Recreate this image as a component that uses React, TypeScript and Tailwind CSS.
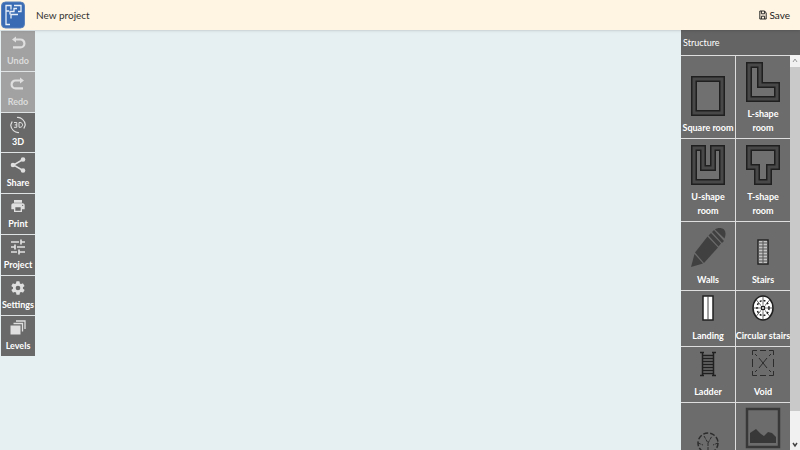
import type { ReactNode } from "react";

const UndoIcon = () => (
  <svg viewBox="0 0 16 16" className="size-4" fill="none" stroke="currentColor" strokeWidth="2.2">
    <path d="M4 4.500h6.500a3.800 3.800 0 0 1 0 7.800H3" />
    <path d="M6 1.500v6L2 4.500z" fill="currentColor" stroke="none" />
  </svg>
);

const RedoIcon = () => (
  <svg viewBox="0 0 16 16" className="size-4" fill="none" stroke="currentColor" strokeWidth="2.2">
    <path d="M12 4.500H5.500a3.800 3.800 0 0 0 0 7.800H13" />
    <path d="M10 1.500v6l4-3z" fill="currentColor" stroke="none" />
  </svg>
);

const ThreeDIcon = () => (
  <svg viewBox="0 0 18 18" className="size-[18px]" fill="none" stroke="currentColor">
    <path d="M8 1.500c4-.5 8 3 8.300 7.500M14.800 12.500l1.500-3.500M10 16.500C6 17 2 13.500 1.700 9M3.200 5.500L1.700 9" strokeWidth="1.200" />
    <path d="M5 6.500h2.800v4.800H5M5.800 8.900h2M10 6.500v4.800h1c3.400 0 3.400-4.800 0-4.800z" />
  </svg>
);

const ShareIcon = () => (
  <svg viewBox="0 0 18 18" className="size-[18px]" fill="currentColor">
    <path d="M14 3.500L4.500 9l9.500 5.500" fill="none" stroke="currentColor" strokeWidth="1.500" />
    <circle cx="14" cy="3.500" r="2.300" />
    <circle cx="4" cy="9" r="2.300" />
    <circle cx="14" cy="14.500" r="2.300" />
  </svg>
);

const PrintIcon = () => (
  <svg viewBox="0 0 24 24" className="size-4" fill="currentColor">
    <path d="M19 8H5c-1.700 0-3 1.300-3 3v6h4v4h12v-4h4v-6c0-1.700-1.300-3-3-3zm-3 11H8v-5h8v5zm3-7a1 1 0 1 1 0-2 1 1 0 0 1 0 2zM18 3H6v4h12V3z" />
  </svg>
);

const ProjectIcon = () => (
  <svg viewBox="0 0 18 18" className="size-[18px]" fill="none" stroke="currentColor" strokeWidth="1.700">
    <path d="M2 4h8M12 4h4M12 1.500v5M2 9h4M8 9h8M6 6.500v5M2 14h6M10 14h6M10 11.500v5" />
  </svg>
);

const SettingsIcon = () => (
  <svg viewBox="0 0 24 24" className="size-4" fill="currentColor">
    <path d="M19.400 13a7.800 7.800 0 0 0 0-2l2.100-1.600a.5.5 0 0 0 .1-.7l-2-3.400a.5.500 0 0 0-.6-.2l-2.500 1a7.300 7.300 0 0 0-1.700-1l-.4-2.600a.5.500 0 0 0-.5-.5h-4a.5.500 0 0 0-.5.500L9 5.100a7.700 7.700 0 0 0-1.700 1l-2.500-1a.5.500 0 0 0-.6.200l-2 3.400a.5.500 0 0 0 .1.700L4.500 11a8 8 0 0 0 0 2l-2.100 1.600a.5.500 0 0 0-.1.700l2 3.400c.1.200.4.300.6.200l2.500-1a7.300 7.300 0 0 0 1.700 1l.4 2.600c0 .3.200.5.500.5h4c.3 0 .5-.2.500-.5l.4-2.600a7.700 7.700 0 0 0 1.700-1l2.500 1c.2.100.5 0 .6-.2l2-3.400a.5.500 0 0 0-.1-.7zM12 15.500a3.500 3.500 0 1 1 0-7 3.500 3.500 0 0 1 0 7z" />
  </svg>
);

const LevelsIcon = () => (
  <svg viewBox="0 0 18 18" className="size-[18px]" fill="none" stroke="currentColor">
    <rect x="2" y="7" width="9" height="8" fill="currentColor" />
    <path d="M4.500 4.500h9v8M7 2h9v8" strokeWidth="1.300" />
  </svg>
);

// the same outline drawn twice: dark edges first, then the grey wall between them
const Room = ({ d }: { d: string }) => (
  <svg viewBox="0 0 36 42" className="h-[42px] w-9" fill="#707070">
    <path d={d} stroke="#1f1f1f" strokeWidth="6" />
    <path d={d} stroke="#484848" strokeWidth="3" fill="none" />
  </svg>
);

const WallsIcon = () => (
  <svg viewBox="0 0 36 42" className="h-[42px] w-9" fill="#404040">
    <path d="M1 40L4.500 27l8.500 9.500z" />
    <path d="M5 25.500L17.500 9.500 28 20.500 14 36z" />
    <path d="M18.500 8.500L21 6l10 10.500-2.500 3zM22 5l2-2 10 11-2 2zM25 2.500c2-2 7-2 9 0s2 6 .5 9z" />
  </svg>
);

const StairsIcon = () => (
  <svg viewBox="0 0 12 26" className="h-[26px] w-3">
    <rect x="1" y="1" width="10" height="24" fill="#c4c4c4" stroke="#252525" strokeWidth="1.500" />
    <path d="M6 1v24M1 4h10M1 7h10M1 10h10M1 13h10M1 16h10M1 19h10M1 22h10" stroke="#555" />
  </svg>
);

const LandingIcon = () => (
  <svg viewBox="0 0 12 26" className="h-[26px] w-3">
    <rect x="1" y="1" width="10" height="24" fill="#fff" stroke="#202020" strokeWidth="1.500" />
    <path d="M6 1v24" stroke="#444" />
  </svg>
);

const CircularIcon = () => (
  <svg viewBox="0 0 24 26" className="h-[26px] w-6" fill="none" stroke="#202020">
    <ellipse cx="12" cy="13" rx="10" ry="12" fill="#fff" strokeWidth="1.500" />
    <ellipse cx="12" cy="13" rx="6" ry="7.500" strokeWidth="1.500" strokeDasharray="2 2" />
    <path d="M12 1v24M2 13h20M5 4.500l14 17M19 4.500L5 21.500" strokeWidth=".7" />
    <circle cx="12" cy="13" r="3" fill="#222" stroke="#eee" />
    <circle cx="12" cy="13" r="1" fill="#eee" stroke="none" />
  </svg>
);

const LadderIcon = () => (
  <svg viewBox="0 0 16 26" className="h-[26px] w-4" fill="none" stroke="#202020">
    <path d="M2.500 1v24M13.500 1v24" strokeWidth="1.500" />
    <path d="M0 1.500h4M12 1.500h4M0 24.500h4M12 24.500h4M2 4.500h12M2 7.500h12M2 10.500h12M2 13.500h12M2 16.500h12M2 19.500h12M2 22.500h12" strokeWidth="1.500" />
  </svg>
);

const VoidIcon = () => (
  <svg viewBox="0 0 24 28" className="h-7 w-6" fill="none" stroke="#2c2c2c">
    <path d="M1.500 6V1.500H6M9 1.500h6M18 1.500h4.500V6M22.500 10v8M22.500 22v4.500H18M15 26.500H9M6 26.500H1.500V22M1.500 18v-8" />
    <path d="M4 5l2 2M8 9l8 10M18 21l2 2M20 5l-2 2M16 9L8 19M6 21l-2 2" />
  </svg>
);

const PictureIcon = () => (
  <svg viewBox="0 0 36 42" className="h-[42px] w-9">
    <rect x="2" y="2" width="32" height="38" fill="#6c6c6c" stroke="#383838" strokeWidth="2.500" />
    <path d="M5 36V26l6-4 5 5 3 2 4-4 4 1 4 4v6z" fill="#383838" />
  </svg>
);

const DomeIcon = () => (
  <svg viewBox="0 0 24 24" className="size-6" fill="none" stroke="#2c2c2c">
    <circle cx="12" cy="12" r="10" strokeDasharray="5 2" strokeWidth="1.500" />
    <path d="M8 5l4 7 4-7M12 12v10M2 12l5 2M22 12l-5 2" strokeDasharray="3 1" />
  </svg>
);

const tools = [
  { label: "Undo", icon: <UndoIcon />, disabled: true },
  { label: "Redo", icon: <RedoIcon />, disabled: true },
  { label: "3D", icon: <ThreeDIcon /> },
  { label: "Share", icon: <ShareIcon /> },
  { label: "Print", icon: <PrintIcon /> },
  { label: "Project", icon: <ProjectIcon /> },
  { label: "Settings", icon: <SettingsIcon /> },
  { label: "Levels", icon: <LevelsIcon /> },
];

const StructureItem = ({ label, children }: { label: string; children: ReactNode }) => (
  <button className="flex min-w-0 flex-col items-center justify-end bg-[#6c6c6c] pb-[3px] text-[9px] font-bold leading-[14px] text-white hover:bg-[#777]">
    {children}
    <span className="mt-1">{label}</span>
  </button>
);

const App = () => {
  return (
    <div className="flex h-screen flex-col overflow-hidden bg-[#e6eff2] font-['Lato','Open_Sans',sans-serif]">
      <header className="z-10 flex h-[30px] shrink-0 items-center bg-[#fff5e2] pr-2.5 shadow">
        <svg viewBox="0 0 24 28" className="ml-px h-7 w-6" fill="none">
          <rect x=".5" y="1" width="23" height="26" rx="4" fill="#386bb3" stroke="#5c83bd" />
          <path d="M9 23.500H5v-19h5v4M5 10h3M13 4.500h7v6h-3M16 7.500h-3v3H9v3M17 13.500h-7v4" stroke="#e8eef8" strokeWidth="1.300" />
        </svg>
        <h1 className="ml-[11px] text-[10px] text-[#333]">New project</h1>
        <button className="ml-auto flex items-center gap-0.5 text-[10px] text-[#222]">
          <svg viewBox="0 0 10 12" className="h-2.5 w-2" fill="none" stroke="#222" strokeWidth="1.200">
            <path d="M1 1h6l2 2.500V11H1zM3 1v3.500h4V1M3 11V7.500h4V11" />
          </svg>
          Save
        </button>
      </header>

      <div className="flex min-h-0 flex-1">
        <nav className="ml-px mt-px grid h-[325px] w-[34px] shrink-0 auto-rows-fr gap-px bg-[#dfe3e4]">
          {tools.map(({ label, icon, disabled }) => (
            <button
              key={label}
              disabled={disabled}
              className="flex flex-col items-center justify-between bg-[#696969] pb-[3px] pt-0.5 text-[9px] font-bold leading-[14px] text-white disabled:bg-[#a2a2a2] disabled:text-[#dcdcdc]"
            >
              <span className="flex h-5 items-center text-[#dfdfdf]">{icon}</span>
              {label}
            </button>
          ))}
        </nav>

        <main className="flex-1" />

        <aside className="flex w-[119px] shrink-0 flex-col">
          <h2 className="flex h-[25px] shrink-0 items-center bg-[#646464] px-0.5 text-[9px] text-white">
            Structure
          </h2>
          <div className="flex min-h-0 flex-1">
            <div className="grid flex-1 grid-cols-2 grid-rows-[82px_82px_68px_55px_55px_75px] gap-px overflow-hidden bg-[#dedede] pt-px">
              <StructureItem label="Square room">
                <Room d="M4 4h28v34H4z" />
              </StructureItem>
              <StructureItem label="L-shape room">
                <Room d="M4 4h11v20h17v14H4z" />
              </StructureItem>
              <StructureItem label="U-shape room">
                <Room d="M4 4h9v20h10V4h9v34H4z" />
              </StructureItem>
              <StructureItem label="T-shape room">
                <Room d="M4 4h28v19h-8v15H12V23H4z" />
              </StructureItem>
              <StructureItem label="Walls">
                <WallsIcon />
              </StructureItem>
              <StructureItem label="Stairs">
                <span className="mb-1">
                  <StairsIcon />
                </span>
              </StructureItem>
              <StructureItem label="Landing">
                <span className="mb-1">
                  <LandingIcon />
                </span>
              </StructureItem>
              <StructureItem label="Circular&nbsp;stairs">
                <span className="mb-1">
                  <CircularIcon />
                </span>
              </StructureItem>
              <StructureItem label="Ladder">
                <span className="mb-1">
                  <LadderIcon />
                </span>
              </StructureItem>
              <StructureItem label="Void">
                <span className="mb-1">
                  <VoidIcon />
                </span>
              </StructureItem>
              <button aria-label="Dome" className="flex justify-center bg-[#6c6c6c] pt-7">
                <DomeIcon />
              </button>
              <button aria-label="Picture" className="flex justify-center bg-[#6c6c6c] pt-1">
                <PictureIcon />
              </button>
            </div>
            <div className="flex w-2.5 flex-col items-center justify-between bg-[#f1f1f1]">
              <svg viewBox="0 0 10 12" className="h-3 w-2.5" fill="none" stroke="#999">
                <path d="M3 7l2-3 2 3" />
              </svg>
              <div className="mb-auto h-[87%] w-full bg-[#c9c9c9]" />
              <svg viewBox="0 0 10 12" className="h-3 w-2.5" fill="none" stroke="#444" strokeWidth="1.500">
                <path d="M3 5l2 3 2-3" />
              </svg>
            </div>
          </div>
        </aside>
      </div>
    </div>
  );
};

export default App;
